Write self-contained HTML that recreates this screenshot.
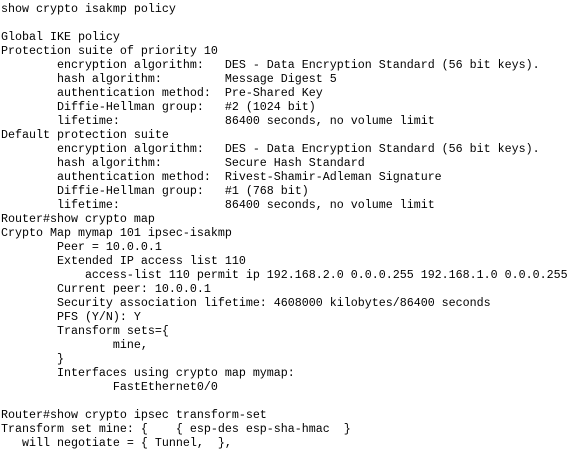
<!DOCTYPE html>
<html><head><meta charset="utf-8"><style>
html,body{margin:0;padding:0;background:#fff;width:583px;height:452px;overflow:hidden}
pre{margin:0;padding:2px 0 0 1px;font-family:"Liberation Mono","Courier New",monospace;font-size:11.67px;line-height:14px;color:#000;tab-size:8;-moz-tab-size:8;white-space:pre}
</style></head><body><pre>show crypto isakmp policy

Global IKE policy
Protection suite of priority 10
        encryption algorithm:   DES - Data Encryption Standard (56 bit keys).
        hash algorithm:         Message Digest 5
        authentication method:  Pre-Shared Key
        Diffie-Hellman group:   #2 (1024 bit)
        lifetime:               86400 seconds, no volume limit
Default protection suite
        encryption algorithm:   DES - Data Encryption Standard (56 bit keys).
        hash algorithm:         Secure Hash Standard
        authentication method:  Rivest-Shamir-Adleman Signature
        Diffie-Hellman group:   #1 (768 bit)
        lifetime:               86400 seconds, no volume limit
Router#show crypto map
Crypto Map mymap 101 ipsec-isakmp
        Peer = 10.0.0.1
        Extended IP access list 110
            access-list 110 permit ip 192.168.2.0 0.0.0.255 192.168.1.0 0.0.0.255
        Current peer: 10.0.0.1
        Security association lifetime: 4608000 kilobytes/86400 seconds
        PFS (Y/N): Y
        Transform sets={
                mine,
        }
        Interfaces using crypto map mymap:
                FastEthernet0/0

Router#show crypto ipsec transform-set
Transform set mine: {    { esp-des esp-sha-hmac  }
   will negotiate = { Tunnel,  },
</pre></body></html>
